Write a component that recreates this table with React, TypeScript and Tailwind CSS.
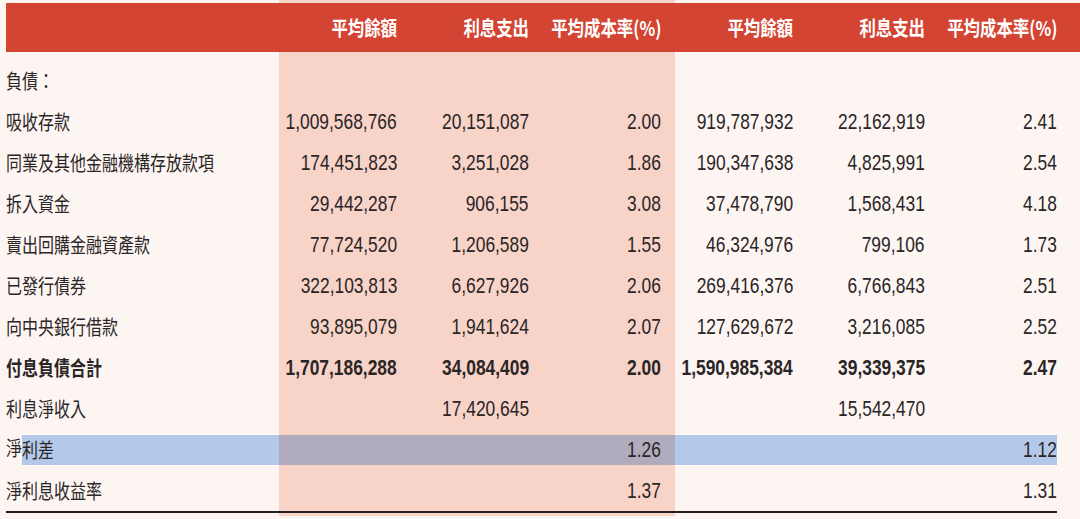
import React from 'react';

type Row = {
  label: string;
  vals: string[];
  bold?: boolean;
  highlight?: boolean;
};

const rows: Row[] = [
  { label: '負債：', vals: ['', '', '', '', '', ''] },
  { label: '吸收存款', vals: ['1,009,568,766', '20,151,087', '2.00', '919,787,932', '22,162,919', '2.41'] },
  { label: '同業及其他金融機構存放款項', vals: ['174,451,823', '3,251,028', '1.86', '190,347,638', '4,825,991', '2.54'] },
  { label: '拆入資金', vals: ['29,442,287', '906,155', '3.08', '37,478,790', '1,568,431', '4.18'] },
  { label: '賣出回購金融資產款', vals: ['77,724,520', '1,206,589', '1.55', '46,324,976', '799,106', '1.73'] },
  { label: '已發行債券', vals: ['322,103,813', '6,627,926', '2.06', '269,416,376', '6,766,843', '2.51'] },
  { label: '向中央銀行借款', vals: ['93,895,079', '1,941,624', '2.07', '127,629,672', '3,216,085', '2.52'] },
  { label: '付息負債合計', vals: ['1,707,186,288', '34,084,409', '2.00', '1,590,985,384', '39,339,375', '2.47'], bold: true },
  { label: '利息淨收入', vals: ['', '17,420,645', '', '', '15,542,470', ''] },
  { label: '淨利差', vals: ['', '', '1.26', '', '', '1.12'], highlight: true },
  { label: '淨利息收益率', vals: ['', '', '1.37', '', '', '1.31'] },
];

const headers = ['平均餘額', '利息支出', '平均成本率(%)', '平均餘額', '利息支出', '平均成本率(%)'];

const grid = 'grid grid-cols-[273px_repeat(6,132px)]';
const cjk = "font-['Noto_Sans_CJK_TC','Noto_Sans',sans-serif]";
const num = "font-['Liberation_Sans',sans-serif]";

const Label: React.FC<{ text: string; bold?: boolean }> = ({ text, bold }) => (
  <span
    className={`${cjk} inline-block origin-left scale-x-[0.8] whitespace-nowrap text-[20px] leading-none ${
      bold ? 'font-bold' : 'font-normal'
    }`}
  >
    {text}
  </span>
);

export default function App() {
  return (
    <div className="w-[1080px] h-[519px] overflow-hidden bg-[#fdf5f2] pl-[6px] text-[#2a2526]">
      {/* top strip */}
      <div className={`${grid} h-[3px]`}>
        <div />
        <div className="bg-[#f7d3c8]" />
        <div className="bg-[#f7d3c8]" />
        <div className="bg-[#f7d3c8]" />
      </div>

      {/* header */}
      <div className={`${grid} h-[49px] bg-[#d44433]`}>
        <div />
        {headers.map((h, i) => (
          <div key={i} className="flex items-center justify-end pr-[14px] text-white">
            <span
              className={`${cjk} inline-block origin-right scale-x-[0.82] whitespace-nowrap text-[20px] font-bold leading-none`}
            >
              {h}
            </span>
          </div>
        ))}
      </div>

      {/* spacer */}
      <div className={`${grid} h-[8px]`}>
        <div />
        <div className="bg-[#f7d3c8]" />
        <div className="bg-[#f7d3c8]" />
        <div className="bg-[#f7d3c8]" />
      </div>

      {rows.map((row, r) => (
        <div key={r} className={`${grid} h-[41px]`}>
          {row.highlight ? (
            <div className="flex items-center">
              <span className="w-[16px] overflow-visible">
                <Label text={row.label.slice(0, 1)} />
              </span>
              <div className="flex h-[30px] flex-1 items-center bg-[#b4c9ea]">
                <Label text={row.label.slice(1)} />
              </div>
            </div>
          ) : (
            <div className="flex items-center">
              <Label text={row.label} bold={row.bold} />
            </div>
          )}
          {row.vals.map((v, c) => {
            const shaded = c < 3;
            return (
              <div
                key={c}
                className={`flex items-center ${shaded ? 'bg-[#f7d3c8]' : ''} ${c === 5 ? 'pr-[14px]' : ''}`}
              >
                <div
                  className={`flex w-full items-center justify-end ${c === 5 ? '' : 'pr-[14px]'} ${
                    row.highlight ? 'h-[30px]' : ''
                  } ${row.highlight ? (shaded ? 'bg-[#b1acbd]' : 'bg-[#b4c9ea]') : ''}`}
                >
                  <span
                    className={`${num} inline-block origin-right scale-x-[0.79] whitespace-nowrap text-[22px] leading-none ${
                      row.bold ? 'font-bold' : 'font-normal'
                    }`}
                  >
                    {v}
                  </span>
                </div>
              </div>
            );
          })}
        </div>
      ))}

      {/* bottom rule */}
      <div className={`${grid} h-[5px]`}>
        <div className="border-t-2 border-[#231f20]" />
        <div className="border-t-2 border-[#231f20] bg-[#f7d3c8]" />
        <div className="border-t-2 border-[#231f20] bg-[#f7d3c8]" />
        <div className="border-t-2 border-[#231f20] bg-[#f7d3c8]" />
        <div className="border-t-2 border-[#231f20]" />
        <div className="border-t-2 border-[#231f20]" />
        <div className="mr-[14px] border-t-2 border-[#231f20]" />
      </div>
    </div>
  );
}
